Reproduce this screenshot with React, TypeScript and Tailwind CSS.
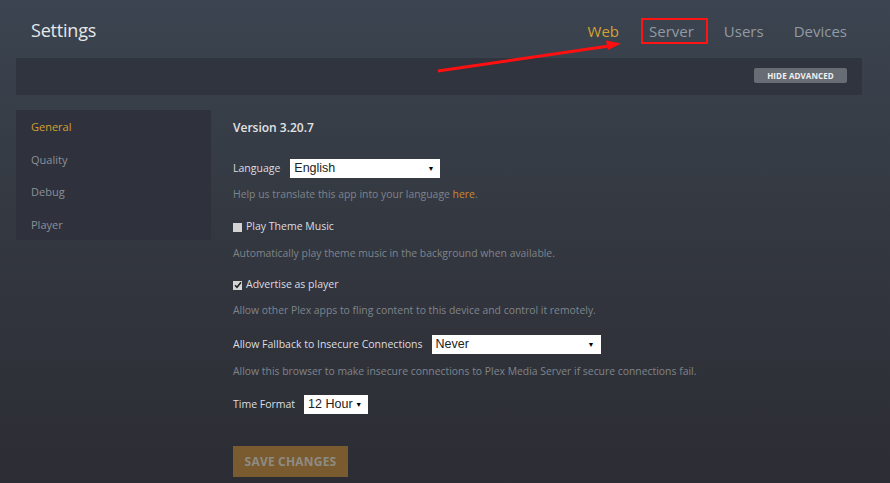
import React from 'react'

const tabs = ['Web', 'Server', 'Users', 'Devices']
const sideItems = ['General', 'Quality', 'Debug', 'Player']

const SelectBox = ({ value, width }: { value: string; width: string }) => (
  <div
    className={`${width} h-[19px] bg-white flex items-center justify-between pl-[4px] pr-[6px] text-[12.5px] text-[#222] font-['Liberation_Sans',sans-serif]`}
  >
    <span>{value}</span>
    <span className="text-[7px] leading-none text-black">▼</span>
  </div>
)

const Check = ({ checked }: { checked?: boolean }) => (
  <span className="w-[9px] h-[9px] bg-[#d4d4d4] flex items-center justify-center mr-[4px]">
    {checked && (
      <svg width="8" height="8" viewBox="0 0 8 8">
        <path d="M1 4.2 L3 6.2 L7 1.3" stroke="#222" strokeWidth="1.6" fill="none" />
      </svg>
    )}
  </span>
)

const App = () => {
  return (
    <div className="relative w-[890px] h-[483px] overflow-hidden bg-gradient-to-b from-[#3b4450] via-[#33373f] to-[#2c2d34] font-['Open_Sans',sans-serif]">
      {/* Header */}
      <div className="flex items-center h-[58px] pl-[31px] pr-[43px]">
        <h1 className="text-[18px] text-[#e6e8ea] tracking-[-0.2px] pt-[2px]">Settings</h1>
        <nav className="ml-auto flex items-center gap-[30px] text-[15px] leading-[20px] pt-[3px]">
          {tabs.map((t) => (
            <div key={t} className="relative">
              <span className={t === 'Web' ? 'text-[#d3a032]' : 'text-[#939aa3]'}>{t}</span>
              {t === 'Server' && (
                <span className="absolute left-[-8px] right-[-14px] top-[-3px] bottom-[-3px] border-2 border-[#ff1414]" />
              )}
            </div>
          ))}
        </nav>
      </div>

      {/* Advanced bar */}
      <div className="ml-[16px] mr-[28px] h-[37px] bg-[#2f343f] flex items-center justify-end pr-[15px]">
        <button className="w-[93px] h-[15px] mb-[2px] rounded-[2px] bg-[#686c75] text-[8px] font-bold text-[#f0f0f0] tracking-[0.1px]">
          HIDE ADVANCED
        </button>
      </div>

      {/* Body */}
      <div className="flex mt-[15px]">
        <aside className="ml-[16px] w-[195px] h-[130px] bg-[#2f323c] pl-[15px] pt-[1px]">
          {sideItems.map((s) => (
            <div
              key={s}
              className={`h-[32.5px] flex items-center text-[11px] ${s === 'General' ? 'text-[#d3a032]' : 'text-[#8c9098]'}`}
            >
              {s}
            </div>
          ))}
        </aside>

        <main className="ml-[22px] flex flex-col text-[10.5px] text-[#dcdde0]">
          <div className="mt-[8px] h-[20px] flex items-center text-[12px] font-semibold text-[#e2e3e5]">
            Version 3.20.7
          </div>

          <div className="mt-[21px] flex items-center">
            <span className="mr-[10px]">Language</span>
            <SelectBox value="English" width="w-[150px]" />
          </div>
          <div className="mt-[9px] h-[16px] flex items-center text-[10.4px] text-[#7f848c]">
            Help us translate this app into your language&nbsp;<span className="text-[#c98b2c]">here</span>.
          </div>

          <div className="mt-[16px] h-[16px] flex items-center">
            <Check />
            Play Theme Music
          </div>
          <div className="mt-[11px] h-[16px] flex items-center text-[10.4px] text-[#7f848c]">
            Automatically play theme music in the background when available.
          </div>

          <div className="mt-[15px] h-[16px] flex items-center">
            <Check checked />
            Advertise as player
          </div>
          <div className="mt-[10px] h-[16px] flex items-center text-[10.4px] text-[#7f848c]">
            Allow other Plex apps to fling content to this device and control it remotely.
          </div>

          <div className="mt-[16px] flex items-center">
            <span className="mr-[9px]">Allow Fallback to Insecure Connections</span>
            <SelectBox value="Never" width="w-[169px]" />
          </div>
          <div className="mt-[10px] h-[16px] flex items-center text-[10.4px] text-[#7f848c]">
            Allow this browser to make insecure connections to Plex Media Server if secure connections fail.
          </div>

          <div className="mt-[15px] flex items-center">
            <span className="mr-[9px]">Time Format</span>
            <SelectBox value="12 Hour" width="w-[64px]" />
          </div>

          <button className="mt-[32px] w-[115px] h-[31px] bg-[#7a5b2f] text-[12px] font-bold text-[#8e8b85] tracking-[0.2px]">
            SAVE CHANGES
          </button>
        </main>
      </div>

      {/* Red annotation arrow */}
      <svg className="absolute inset-0 pointer-events-none" width="890" height="483">
        <line x1="438" y1="71" x2="609" y2="46" stroke="#ff1010" strokeWidth="3" />
        <polygon points="621,43.5 606,40.5 608,50" fill="#ff1010" />
      </svg>
    </div>
  )
}

export default App
